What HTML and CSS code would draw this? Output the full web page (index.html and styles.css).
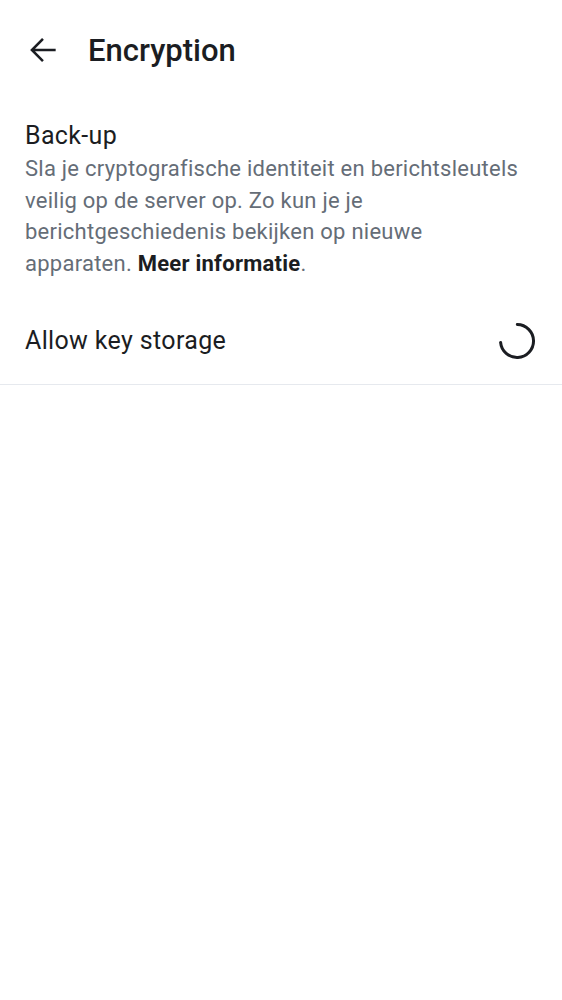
FILE: index.html
```html
<!DOCTYPE html>
<html>
<head>
<meta charset="utf-8">
<link rel="stylesheet" href="styles.css">
</head>
<body>
<header class="topbar">
  <button class="back" aria-label="Back">
    <svg width="38" height="38" viewBox="0 0 24 24"><path d="M19.2 12H5.4M11.4 5.6L5 12l6.4 6.4" fill="none" stroke="#1b1d22" stroke-width="1.6" stroke-linecap="square"/></svg>
  </button>
  <h1 class="title">Encryption</h1>
</header>
<section class="backup">
  <div class="heading">Back-up</div>
  <p class="desc">Sla je cryptografische identiteit en berichtsleutels veilig op de server op. Zo kun je je berichtgeschiedenis bekijken op nieuwe apparaten. <b>Meer informatie</b>.</p>
</section>
<div class="row">
  <span class="label">Allow key storage</span>
  <svg class="spinner" width="40" height="40" viewBox="0 0 40 40"><path d="M20.3 3.5 A16.5 16.5 0 1 1 3.6 21.4" fill="none" stroke="#1b1d22" stroke-width="3" stroke-linecap="round"/></svg>
</div>
</body>
</html>
```
FILE: styles.css
```css
* { box-sizing: border-box; }
html, body { margin: 0; padding: 0; background: #fff; }
body { font-family: Roboto, "Noto Sans", sans-serif; color: #1b1d22; width: 562px; }
.topbar { display: flex; align-items: center; height: 100px; padding-left: 24px; }
.back { border: 0; background: none; padding: 0; width: 38px; height: 38px; display: flex; align-items: center; justify-content: center; }
.back svg { display: block; }
.title { margin: 0 0 0 26px; font-size: 31px; font-weight: 500; letter-spacing: 0; }
.backup { padding: 20px 38px 0 25px; }
.heading { font-size: 25px; line-height: 32px; letter-spacing: 0.35px; }
.desc { margin: 0; font-size: 22px; line-height: 31.5px; color: #656d77; padding-top: 1px; letter-spacing: 0.25px; }
.desc b { color: #1b1d22; font-weight: 700; }
.row { display: flex; align-items: center; justify-content: space-between; padding: 0 25px 0 25px; height: 88px; margin-top: 18px; border-bottom: 1.5px solid #e6e9ee; }
.label { font-size: 25px; letter-spacing: 0.35px; }
.spinner { display: block; }
```
